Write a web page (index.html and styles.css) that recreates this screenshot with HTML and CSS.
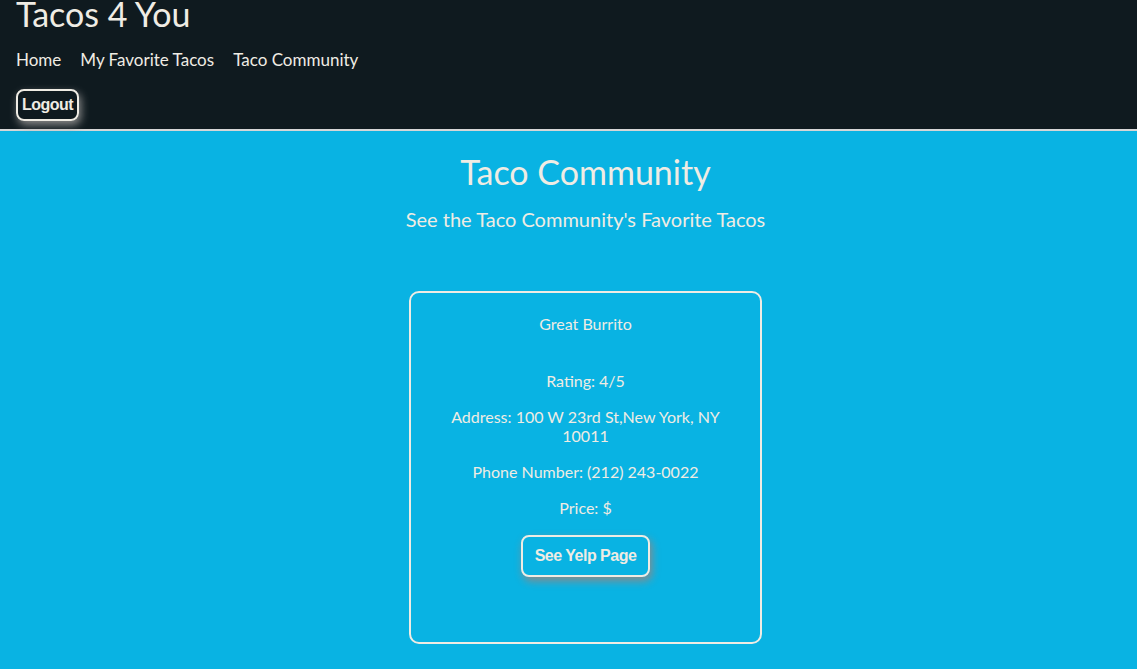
FILE: index.html
```html
<!DOCTYPE html>
<html>
<head>
<meta charset="utf-8">
<link rel="stylesheet" href="styles.css">
</head>
<body>
<header class="site-header">
  <h1 class="brand">Tacos 4 You</h1>
  <nav class="nav">
    <a class="nav-link" href="#">Home</a>
    <a class="nav-link" href="#">My Favorite Tacos</a>
    <a class="nav-link" href="#">Taco Community</a>
  </nav>
  <button class="btn">Logout</button>
</header>
<main class="main">
  <h2 class="page-title">Taco Community</h2>
  <p class="subtitle">See the Taco Community's Favorite Tacos</p>
  <section class="card">
    <p class="card-name">Great Burrito</p>
    <p class="card-line">Rating: 4/5</p>
    <p class="card-line">Address: 100 W 23rd St,New York, NY 10011</p>
    <p class="card-line">Phone Number: (212) 243-0022</p>
    <p class="card-line">Price: $</p>
    <button class="btn btn-yelp">See Yelp Page</button>
  </section>
</main>
</body>
</html>
```
FILE: styles.css
```css
html, body {
  margin: 0;
  padding: 0;
}
body {
  background: #09b3e3;
  font-family: Lato, "Noto Sans", sans-serif;
  color: #efece4;
}
.site-header {
  background: #0f1a1f;
  padding: 0 16px 8px;
  border-bottom: 2px solid #d6d6d6;
  display: flex;
  flex-direction: column;
  align-items: flex-start;
}
.brand {
  margin: -6px 0 0;
  font-size: 34px;
  font-weight: 400;
  line-height: 40px;
}
.nav {
  display: flex;
  gap: 19px;
  margin-top: 15px;
  height: 20px;
  align-items: center;
}
.nav-link {
  color: #efece4;
  text-decoration: none;
  font-size: 17px;
}
.btn {
  margin-top: 20px;
  background: transparent;
  color: #efece4;
  border: 2px solid #efece4;
  border-radius: 8px;
  font-family: "Liberation Sans", Arial, sans-serif;
  font-weight: 700;
  font-size: 16px;
  letter-spacing: -0.5px;
  padding: 4px 4px;
  height: 32px;
  box-shadow: 2px 4px 8px #8a8a8a;
}
.main {
  padding-left: 34px;
  display: flex;
  flex-direction: column;
  align-items: center;
}
.page-title {
  margin: 21px 0 0;
  font-size: 34px;
  font-weight: 400;
  line-height: 40px;
}
.subtitle {
  margin: 14px 0 0;
  font-size: 20px;
  line-height: 26px;
}
.card {
  margin-top: 59px;
  width: 353px;
  height: 353px;
  box-sizing: border-box;
  border: 2px solid #efece4;
  border-radius: 10px;
  padding: 20px 38px;
  display: flex;
  flex-direction: column;
  align-items: center;
  text-align: center;
}
.card-name {
  margin: 0;
  font-size: 16px;
  line-height: 22px;
}
.card-line {
  margin: 17px 0 0;
  font-size: 16px;
  line-height: 19px;
}
.card-name + .card-line {
  margin-top: 36px;
}
.btn-yelp {
  margin-top: 18px;
  height: 42px;
  padding: 4px 12px;
}
```
